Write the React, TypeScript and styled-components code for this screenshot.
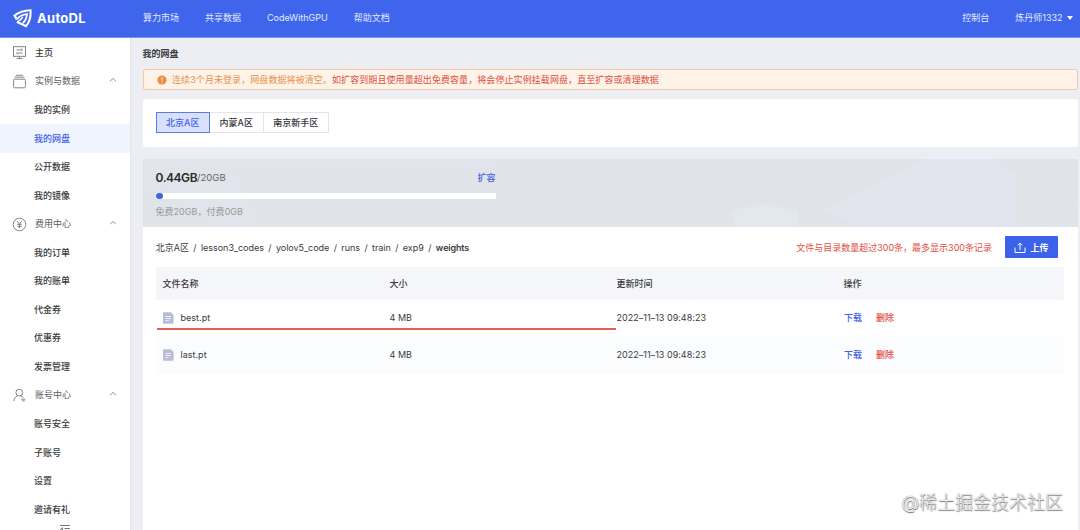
import React from "react";
import styled, { createGlobalStyle, css } from "styled-components";

const Global = createGlobalStyle`
  * { box-sizing: border-box; }
  html, body { margin: 0; padding: 0; height: 530px; overflow: hidden; }
  body {
    font-family: Inter, "Noto Sans CJK SC", sans-serif;
    font-size: 9px;
    line-height: 14px;
    color: #3a3a3a;
    background: #eceef4;
  }
`;

const Page = styled.div`
  width: 1080px;
  height: 530px;
  display: flex;
  flex-direction: column;
  overflow: hidden;
`;

const Header = styled.header`
  flex: none;
  height: 38px;
  display: flex;
  align-items: center;
  padding: 0 7px 1px 13px;
  background: #3e65ec;
  border-bottom: 1px solid #7b93f0;
  color: #e3eafd;
`;

const Brand = styled.div`
  width: 130px;
  display: flex;
  align-items: center;
  gap: 5px;
  color: #fff;
`;

const BrandName = styled.span`
  font-size: 13px;
  font-weight: 700;
  letter-spacing: 0.3px;
`;

const NavLink = styled.a<{ $gap: number }>`
  margin-right: ${(p) => p.$gap}px;
  white-space: nowrap;
`;

const Spacer = styled.div`
  flex: 1;
`;

const Caret = styled.i`
  border: 3.5px solid transparent;
  border-top: 4px solid #fff;
  border-bottom: 0;
`;

const Body = styled.div`
  flex: 1;
  display: flex;
  min-height: 0;
`;

const Sidebar = styled.nav`
  flex: none;
  width: 130px;
  padding-top: 0.6px;
  background: #fff;
  overflow: hidden;
`;

const MenuRow = styled.div<{ $sub?: boolean; $active?: boolean; $group?: boolean }>`
  height: 28.55px;
  display: flex;
  align-items: center;
  padding: 0 13px 0 ${(p) => (p.$sub ? 34 : 12)}px;
  color: ${(p) => (p.$active ? "#4460e6" : p.$group ? "#5c5c5c" : "#3a3a3a")};
  font-weight: ${(p) => (p.$group ? 400 : 500)};
  ${(p) =>
    p.$active &&
    css`
      background: #eff4fe;
    `}
`;

const MenuIcon = styled.span`
  display: flex;
  width: 15px;
  height: 15px;
  margin-right: 8px;
  color: #777;
`;

const MenuLabel = styled.span`
  flex: 1;
`;

const CollapseBar = styled.div`
  padding-left: 59px;
  height: 14px;
  display: flex;
`;

const Main = styled.main`
  flex: 1;
  display: flex;
  flex-direction: column;
  padding: 0 2.5px 0 11.5px;
  border-left: 1px solid #e3e5ea;
  min-width: 0;
`;

const Title = styled.h1`
  margin: 0;
  height: 31px;
  line-height: 32px;
  font-size: 9px;
  font-weight: 600;
`;

const Alert = styled.div`
  flex: none;
  height: 21px;
  display: flex;
  align-items: center;
  padding-left: 13.5px;
  background: #fdf3e8;
  border: 1px solid #f0cba6;
  border-radius: 2px;
  color: #ea9148;
  letter-spacing: 0.08px;
  white-space: nowrap;
`;

const AlertIcon = styled.svg`
  margin-right: 5px;
`;

const Danger = styled.span`
  color: #df4f42;
`;

const RegionCard = styled.section`
  flex: none;
  height: 47.5px;
  margin: 9px 0 12.5px;
  padding: 13px;
  background: #fff;
  border-radius: 2px;
  display: flex;
`;

const RegionTab = styled.button<{ $w: number; $active?: boolean }>`
  width: ${(p) => p.$w}px;
  height: 21px;
  padding: 0;
  font: inherit;
  font-weight: 500;
  color: ${(p) => (p.$active ? "#4460e6" : "#333")};
  background: ${(p) => (p.$active ? "#d8e0fc" : "#fff")};
  border: 1px solid ${(p) => (p.$active ? "#5c7be8" : "#e4e5e9")};
  border-left-width: ${(p) => (p.$active ? 1 : 0)}px;
`;

const Quota = styled.section`
  flex: none;
  position: relative;
  height: 68px;
  padding: 10px 0 0 13px;
  background: #e0e3e8;
  border-radius: 2px 2px 0 0;
`;

const QuotaArt = styled.svg`
  position: absolute;
  inset: 0;
`;

const QuotaInfo = styled.div`
  position: relative;
  width: 340.5px;
`;

const QuotaLine = styled.div`
  display: flex;
  align-items: center;
  height: 17px;
`;

const Used = styled.span`
  font-size: 12px;
  font-weight: 600;
  letter-spacing: -0.45px;
  color: #2a2a2a;
`;

const Total = styled.span`
  font-size: 9.5px;
  padding-top: 1px;
  color: #666;
`;

const ActionLink = styled.a<{ $danger?: boolean }>`
  color: ${(p) => (p.$danger ? "#e2483d" : "#4460e6")};
  font-weight: 500;
  margin-right: 14px;
`;

const ExpandLink = styled(ActionLink)`
  margin: 1px 0.5px 0 auto;
`;

const Track = styled.div`
  height: 6px;
  margin: 7px 0 6px;
  background: #fff;
`;

const Fill = styled.div`
  width: 7px;
  height: 6px;
  border-radius: 3px;
  background: #3e65dc;
`;

const QuotaNote = styled.div`
  color: #999;
  letter-spacing: 0.04px;
`;

const Files = styled.section`
  flex: 1;
  padding: 0 13px;
  background: #fff;
`;

const Toolbar = styled.div`
  height: 40px;
  display: flex;
  align-items: center;
  padding-right: 6.5px;
  white-space: nowrap;
`;

const Crumbs = styled.div`
  display: flex;
  gap: 4.45px;
  padding: 1px 0 0 0.3px;
  letter-spacing: -0.035px;
`;

const Current = styled.span`
  font-weight: 600;
  letter-spacing: -0.15px;
`;

const Notice = styled(Danger)`
  padding-top: 1px;
`;

const UploadButton = styled.button`
  width: 53px;
  height: 22px;
  margin-left: 13px;
  padding: 1px 0 0;
  display: flex;
  align-items: center;
  justify-content: center;
  gap: 4px;
  font: inherit;
  font-weight: 600;
  color: #fff;
  background: #3c62ea;
  border: 0;
  border-radius: 1px;
`;

const Table = styled.div`
  position: relative;
  width: 908px;
`;

const Row = styled.div<{ $head?: boolean; $shade?: boolean }>`
  display: grid;
  grid-template-columns: repeat(4, 227px);
  align-items: center;
  height: ${(p) => (p.$head ? 33 : 37)}px;
  padding-bottom: ${(p) => (p.$head ? 0 : 1)}px;
  background: ${(p) => (p.$head ? "#f5f6f9" : p.$shade ? "#fafcfd" : "#fff")};
  font-weight: ${(p) => (p.$head ? 500 : 400)};
`;

const Cell = styled.div`
  display: flex;
  align-items: center;
  padding-left: 7px;
  letter-spacing: 0.02px;
`;

const Actions = styled(Cell)`
  padding-left: 7.5px;
`;

const FileName = styled.span`
  margin-left: 7px;
`;

const Underline = styled.div`
  position: absolute;
  left: 1.5px;
  top: 61px;
  width: 459px;
  height: 2px;
  background: #e2604f;
`;

const Watermark = styled.div`
  position: absolute;
  right: 17px;
  bottom: 15px;
  font-size: 18px;
  font-weight: 300;
  line-height: 24px;
  color: #f2f2f2;
  text-shadow: 0 0 1px #707070, 0.5px 0.5px 1px #707070;
`;

const Logo = () => (
  <svg width="19" height="19" viewBox="0 0 19 19" fill="none" stroke="#fff" strokeWidth="2.1">
    <path d="M3.800 10.400L1.500 6.500C6 3 11 1.500 17.500 1.300C18 7.500 16.500 13 13 17.200L3.800 12.700" />
    <path d="M3.800 10.400C6 7.600 9 5.700 14 5.100C13.700 8.800 12.600 11.700 9.800 14" strokeWidth="1.8" />
    <path d="M4.500 12.600C7 11.500 8.800 10 9.900 7.800" strokeWidth="1.5" />
  </svg>
);

const icons: Record<string, React.ReactNode> = {
  home: (
    <>
      <rect x="1.5" y="1.7" width="12" height="9.6" />
      <path d="M4.500 5h6L9 3.700M10.500 8h-6L6 9.300M7.500 11.300v2M4.500 13.500h6" />
    </>
  ),
  data: (
    <>
      <rect x="1.6" y="5.2" width="11.8" height="8.6" rx="1" />
      <path d="M2.600 3.200h9.800M3.800 1.300h7.400" />
    </>
  ),
  fee: (
    <>
      <circle cx="7.5" cy="7.5" r="6.3" />
      <path d="M5.200 4.200l2.300 3 2.300-3M7.500 7.200v4M5.300 7.400h4.400M5.300 9.300h4.400" />
    </>
  ),
  account: (
    <>
      <circle cx="7.3" cy="4.6" r="3.4" />
      <path d="M1.800 13.100c.3-3 2-4.600 4-5.200M8.800 7.800c1.200.5 1.800 1 2.300 1.900M9.300 11.200h4M10 12.800h2.800" />
    </>
  ),
};

const Glyph = ({ name }: { name: string }) => (
  <svg width="15" height="15" viewBox="0 0 15 15" fill="none" stroke="currentColor" strokeWidth="0.9">
    {icons[name]}
  </svg>
);

const GroupChevron = styled.svg`
  margin-bottom: 2px;
`;

const Chevron = () => (
  <GroupChevron width="8" height="6" viewBox="0 0 8 6" fill="none" stroke="#777" strokeWidth="0.8">
    <path d="M1 4.200L4 1.400l3 2.800" />
  </GroupChevron>
);

const FileIcon = () => (
  <svg width="11" height="12" viewBox="0 0 11 12">
    <path d="M0 1Q0 .3 .700 .3H7.800L10.600 3V11Q10.600 11.700 9.900 11.700H.700Q0 11.700 0 11Z" fill="#b9bdd4" />
    <path d="M2.400 4.500h5.600M2.400 6.500h5.600M2.400 8.500h3.200" stroke="#eef0f8" strokeWidth="0.9" />
  </svg>
);

const UploadIcon = () => (
  <svg width="12" height="12" viewBox="0 0 12 12" fill="none" stroke="#fff" strokeWidth="1">
    <path d="M1 5.500v5h10v-5M6 8V1.300M3.800 3.400L6 1.200l2.200 2.200" />
  </svg>
);

type Item = { label: string; icon?: string; group?: boolean; active?: boolean };

const menu: Item[] = [
  { label: "主页", icon: "home" },
  { label: "实例与数据", icon: "data", group: true },
  { label: "我的实例" },
  { label: "我的网盘", active: true },
  { label: "公开数据" },
  { label: "我的镜像" },
  { label: "费用中心", icon: "fee", group: true },
  { label: "我的订单" },
  { label: "我的账单" },
  { label: "代金券" },
  { label: "优惠券" },
  { label: "发票管理" },
  { label: "账号中心", icon: "account", group: true },
  { label: "账号安全" },
  { label: "子账号" },
  { label: "设置" },
  { label: "邀请有礼" },
];

const path = ["北京A区", "lesson3_codes", "yolov5_code", "runs", "train", "exp9"];

const files = [
  { name: "best.pt", size: "4 MB", time: "2022–11–13 09:48:23" },
  { name: "last.pt", size: "4 MB", time: "2022–11–13 09:48:23" },
];

export default function App() {
  return (
    <Page>
      <Global />
      <Header>
        <Brand>
          <Logo />
          <BrandName>AutoDL</BrandName>
        </Brand>
        <NavLink $gap={26}>算力市场</NavLink>
        <NavLink $gap={26}>共享数据</NavLink>
        <NavLink $gap={26}>CodeWithGPU</NavLink>
        <NavLink $gap={0}>帮助文档</NavLink>
        <Spacer />
        <NavLink $gap={26}>控制台</NavLink>
        <NavLink $gap={4.5}>炼丹师1332</NavLink>
        <Caret />
      </Header>
      <Body>
        <Sidebar>
          {menu.map((m) => (
            <MenuRow key={m.label} $sub={!m.icon} $group={m.group} $active={m.active}>
              {m.icon && (
                <MenuIcon>
                  <Glyph name={m.icon} />
                </MenuIcon>
              )}
              <MenuLabel>{m.label}</MenuLabel>
              {m.group && <Chevron />}
            </MenuRow>
          ))}
          <CollapseBar>
            <svg width="12" height="12" viewBox="0 0 12 12" fill="none" stroke="#666" strokeWidth="0.9">
              <path d="M1 1.500h10M5.500 4.500H11M1.500 5.500l2-1.800v3.600zM5.500 7.500H11" />
            </svg>
          </CollapseBar>
        </Sidebar>
        <Main>
          <Title>我的网盘</Title>
          <Alert>
            <AlertIcon width="10" height="10" viewBox="0 0 10 10">
              <circle cx="5" cy="5" r="4.6" fill="#ec8f3c" />
              <path d="M5 2.200v3.400M5 6.800v1" stroke="#fff" strokeWidth="0.9" />
            </AlertIcon>
            <span>连续3个月未登录，网盘数据将被清空。</span>
            <Danger>如扩容到期且使用量超出免费容量，将会停止实例挂载网盘，直至扩容或清理数据</Danger>
          </Alert>
          <RegionCard>
            <RegionTab $w={54.5} $active>北京A区</RegionTab>
            <RegionTab $w={53.5}>内蒙A区</RegionTab>
            <RegionTab $w={65.5}>南京新手区</RegionTab>
          </RegionCard>
          <Quota>
            <QuotaArt width="935" height="68" viewBox="0 0 935 68" fill="none">
              <path d="M0 0H370L355 8H90L120 68H70L20 30L0 40Z" fill="#e2e5eb" opacity=".5" />
              <path d="M443 68L490 44L508 44L520 58L545 67H600" stroke="#e5e8eb" />
              <path d="M587 52L620 44L655 52V68H592Z" fill="#e3e7ee" />
              <path d="M583 45L620 22L655 45" stroke="#e3e6ea" />
              <path d="M680 52L780 0H850L873 16V68H720Z" fill="#e2e5ed" />
              <path d="M673 32L722 4M900 66L935 48" stroke="#e3e6eb" />
            </QuotaArt>
            <QuotaInfo>
              <QuotaLine>
                <Used>0.44GB</Used>
                <Total>/20GB</Total>
                <ExpandLink>扩容</ExpandLink>
              </QuotaLine>
              <Track>
                <Fill />
              </Track>
              <QuotaNote>免费20GB，付费0GB</QuotaNote>
            </QuotaInfo>
          </Quota>
          <Files>
            <Toolbar>
              <Crumbs>
                {path.map((p) => (
                  <React.Fragment key={p}>
                    <span>{p}</span>
                    <span>/</span>
                  </React.Fragment>
                ))}
                <Current>weights</Current>
              </Crumbs>
              <Spacer />
              <Notice>文件与目录数量超过300条，最多显示300条记录</Notice>
              <UploadButton>
                <UploadIcon />
                上传
              </UploadButton>
            </Toolbar>
            <Table>
              <Row $head>
                <Cell>文件名称</Cell>
                <Cell>大小</Cell>
                <Cell>更新时间</Cell>
                <Cell>操作</Cell>
              </Row>
              {files.map((f, i) => (
                <Row key={f.name} $shade={i === 1}>
                  <Cell>
                    <FileIcon />
                    <FileName>{f.name}</FileName>
                  </Cell>
                  <Cell>{f.size}</Cell>
                  <Cell>{f.time}</Cell>
                  <Actions>
                    <ActionLink>下载</ActionLink>
                    <ActionLink $danger>删除</ActionLink>
                  </Actions>
                </Row>
              ))}
              <Underline />
            </Table>
          </Files>
        </Main>
      </Body>
      <Watermark>@稀土掘金技术社区</Watermark>
    </Page>
  );
}
